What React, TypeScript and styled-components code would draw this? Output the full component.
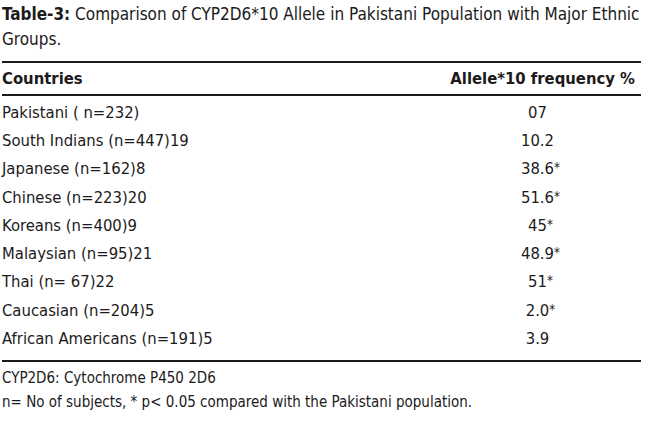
import styled, { createGlobalStyle } from "styled-components";

const GlobalStyle = createGlobalStyle`
  html, body {
    margin: 0;
    padding: 0;
    background: #ffffff;
  }
`;

const FONT = `"Liberation Sans Narrow", "DejaVu Sans Condensed", "Liberation Sans", sans-serif`;
const INK = "#1c1a1b";

const Page = styled.div`
  width: 650px;
  height: 424px;
  padding: 0 9px 0 2px;
  box-sizing: border-box;
  font-family: ${FONT};
  color: ${INK};
  background: #ffffff;
`;

const Caption = styled.p`
  margin: 0;
  padding-top: 2px;
  font-size: 17px;
  line-height: 25px;
  height: 59px;
`;

const CaptionLabel = styled.b`
  font-weight: bold;
`;

const Table = styled.table`
  width: 100%;
  border-collapse: collapse;
  border-top: 2px solid ${INK};
  border-bottom: 2px solid ${INK};
  font-size: 16.5px;
`;

const HeadCell = styled.th<{ $align?: "left" | "right" }>`
  height: 31px;
  padding: 0 6px 0 0;
  text-align: ${({ $align }) => $align ?? "left"};
  font-weight: bold;
  vertical-align: middle;
  border-bottom: 2px solid ${INK};
`;

type Edge = "first" | "last" | undefined;

const Row = styled.tr<{ $edge?: Edge }>`
  height: ${({ $edge }) =>
    $edge === "first" ? "31.3px" : $edge === "last" ? "36.3px" : "28.3px"};
`;

const Cell = styled.td<{ $center?: boolean; $edge?: Edge }>`
  padding: ${({ $edge }) =>
    $edge === "first" ? "3px 6px 0 0" : $edge === "last" ? "0 6px 8px 0" : "0 6px 0 0"};
  font-weight: normal;
  vertical-align: middle;
  text-align: ${({ $center }) => ($center ? "center" : "left")};
  white-space: nowrap;
`;

const Star = styled.span`
  display: inline-block;
  width: 0;
  font-size: 0.8em;
  vertical-align: 0.15em;
`;

const Notes = styled.div`
  padding-top: 4px;
  font-size: 15px;
  line-height: 24px;
`;

const rows: { country: string; value: string; starred?: boolean }[] = [
  { country: "Pakistani ( n=232)", value: "07" },
  { country: "South Indians (n=447)19", value: "10.2" },
  { country: "Japanese (n=162)8", value: "38.6", starred: true },
  { country: "Chinese (n=223)20", value: "51.6", starred: true },
  { country: "Koreans (n=400)9", value: "45", starred: true },
  { country: "Malaysian (n=95)21", value: "48.9", starred: true },
  { country: "Thai (n= 67)22", value: "51", starred: true },
  { country: "Caucasian (n=204)5", value: "2.0", starred: true },
  { country: "African Americans (n=191)5", value: "3.9" },
];

export default function App() {
  return (
    <>
      <GlobalStyle />
      <Page>
        <Caption>
          <CaptionLabel>Table-3:</CaptionLabel> Comparison of CYP2D6*10 Allele in
          Pakistani Population with Major Ethnic Groups.
        </Caption>
        <Table>
          <colgroup>
            <col style={{ width: "438px" }} />
            <col />
          </colgroup>
          <thead>
            <tr>
              <HeadCell>Countries</HeadCell>
              <HeadCell $align="right">Allele*10 frequency %</HeadCell>
            </tr>
          </thead>
          <tbody>
            {rows.map((r, i) => {
              const edge: Edge =
                i === 0 ? "first" : i === rows.length - 1 ? "last" : undefined;
              return (
                <Row key={r.country} $edge={edge}>
                  <Cell $edge={edge}>{r.country}</Cell>
                  <Cell $center $edge={edge}>
                    {r.value}
                    {r.starred && <Star>*</Star>}
                  </Cell>
                </Row>
              );
            })}
          </tbody>
        </Table>
        <Notes>
          <div>CYP2D6: Cytochrome P450 2D6</div>
          <div>n= No of subjects, * p&lt; 0.05 compared with the Pakistani population.</div>
        </Notes>
      </Page>
    </>
  );
}
